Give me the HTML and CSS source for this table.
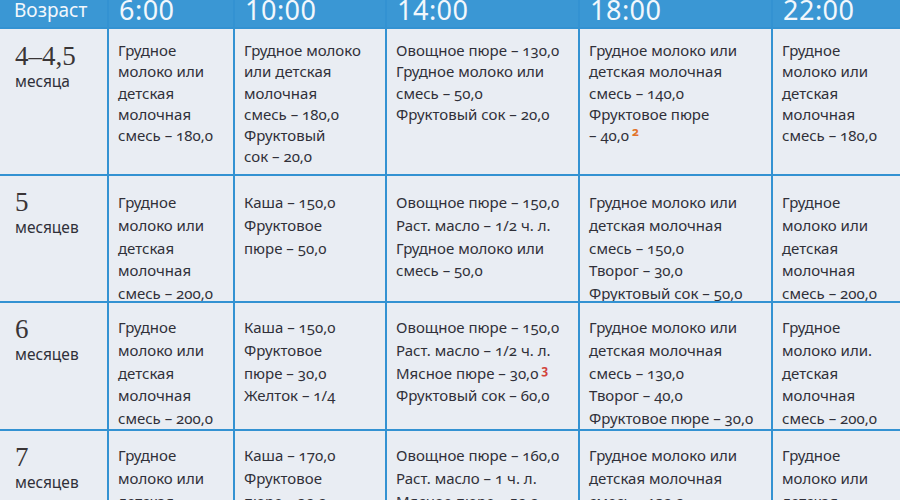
FILE: index.html
```html
<!DOCTYPE html>
<html lang="ru">
<head>
<meta charset="utf-8">
<title>Меню питания</title>
<link rel="stylesheet" href="styles.css">
</head>
<body>
<div class="grid">
  <div class="hd hd-age">Возраст</div>
  <div class="hd">6:00</div>
  <div class="hd">10:00</div>
  <div class="hd">14:00</div>
  <div class="hd">18:00</div>
  <div class="hd">22:00</div>

  <div class="c age r1"><span class="num">4–4,5</span><span class="unit">месяца</span></div>
  <div class="c r1">Грудное<br>молоко или<br>детская<br>молочная<br>смесь – 180,0</div>
  <div class="c r1">Грудное молоко<br>или детская<br>молочная<br>смесь – 180,0<br>Фруктовый<br>сок – 20,0</div>
  <div class="c r1">Овощное пюре – 130,0<br>Грудное молоко или<br>смесь – 50,0<br>Фруктовый сок – 20,0</div>
  <div class="c r1">Грудное молоко или<br>детская молочная<br>смесь – 140,0<br>Фруктовое пюре<br>– 40,0<sup class="n2">2</sup></div>
  <div class="c r1">Грудное<br>молоко или<br>детская<br>молочная<br>смесь – 180,0</div>

  <div class="c age r2"><span class="num">5</span><span class="unit">месяцев</span></div>
  <div class="c r2">Грудное<br>молоко или<br>детская<br>молочная<br>смесь – 200,0</div>
  <div class="c r2">Каша – 150,0<br>Фруктовое<br>пюре – 50,0</div>
  <div class="c r2">Овощное пюре – 150,0<br>Раст. масло – 1/2 ч. л.<br>Грудное молоко или<br>смесь – 50,0</div>
  <div class="c r2">Грудное молоко или<br>детская молочная<br>смесь – 150,0<br>Творог – 30,0<br>Фруктовый сок – 50,0</div>
  <div class="c r2">Грудное<br>молоко или<br>детская<br>молочная<br>смесь – 200,0</div>

  <div class="c age r3"><span class="num">6</span><span class="unit">месяцев</span></div>
  <div class="c r3">Грудное<br>молоко или<br>детская<br>молочная<br>смесь – 200,0</div>
  <div class="c r3">Каша – 150,0<br>Фруктовое<br>пюре – 30,0<br>Желток – 1/4</div>
  <div class="c r3">Овощное пюре – 150,0<br>Раст. масло – 1/2 ч. л.<br>Мясное пюре – 30,0<sup class="n3">3</sup><br>Фруктовый сок – 60,0</div>
  <div class="c r3">Грудное молоко или<br>детская молочная<br>смесь – 130,0<br>Творог – 40,0<br>Фруктовое пюре – 30,0</div>
  <div class="c r3">Грудное<br>молоко или.<br>детская<br>молочная<br>смесь – 200,0</div>

  <div class="c age r4"><span class="num">7</span><span class="unit">месяцев</span></div>
  <div class="c r4">Грудное<br>молоко или<br>детская</div>
  <div class="c r4">Каша – 170,0<br>Фруктовое<br>пюре – 30,0</div>
  <div class="c r4">Овощное пюре – 160,0<br>Раст. масло – 1 ч. л.<br>Мясное пюре – 50,0</div>
  <div class="c r4">Грудное молоко или<br>детская молочная<br>смесь – 120,0</div>
  <div class="c r4">Грудное<br>молоко или<br>детская</div>
</div>
</body>
</html>
```
FILE: styles.css
```css
html, body {
  margin: 0;
  padding: 0;
  width: 900px;
  height: 500px;
  overflow: hidden;
  background: #e9edf3;
}
.grid {
  display: grid;
  grid-template-columns: 107px 124px 150px 191px 191px 140px;
  grid-template-rows: 27px 145px 125px 126px 69px;
  gap: 2px;
  background: #3392d2;
  width: 917px;
  font-family: "Noto Sans", "Open Sans", sans-serif;
  color: #303039;
}
.hd {
  background: #3a97d4;
  color: #f2f7fc;
  font-size: 27px;
  line-height: 20px;
  padding-left: 10px;
  font-family: "Noto Sans", sans-serif;
  letter-spacing: 0.5px;
}
.hd-age {
  font-size: 19px;
  padding-left: 14px;
  line-height: 21px;
  letter-spacing: 0;
}
.c {
  background: #e9edf3;
  font-size: 15px;
  line-height: 21.3px;
  padding: 11px 0 0 9px;
  white-space: nowrap;
  font-variant-numeric: oldstyle-nums;
  overflow: hidden;
}
.r2 { padding-top: 15px; line-height: 22.8px; }
.r3 { padding-top: 13px; line-height: 22.8px; }
.r4 { padding-top: 13px; line-height: 22.8px; }
.age {
  padding-left: 15px;
  display: flex;
  flex-direction: column;
}
.age .num {
  font-family: "Liberation Serif", "DejaVu Serif", serif;
  font-size: 27px;
  line-height: 26px;
  color: #3a3536;
}
.age .unit {
  font-size: 15.5px;
  line-height: 20px;
  margin-top: 2px;
}
.r1.age { padding-top: 14px; }
.r2.age, .r3.age, .r4.age { padding-top: 13px; }
sup {
  font-size: 12px;
  line-height: 0;
  vertical-align: 5px;
  margin-left: 3px;
  font-weight: bold;
}
.n2 { color: #e2732a; }
.n3 { color: #d2433a; }
```
